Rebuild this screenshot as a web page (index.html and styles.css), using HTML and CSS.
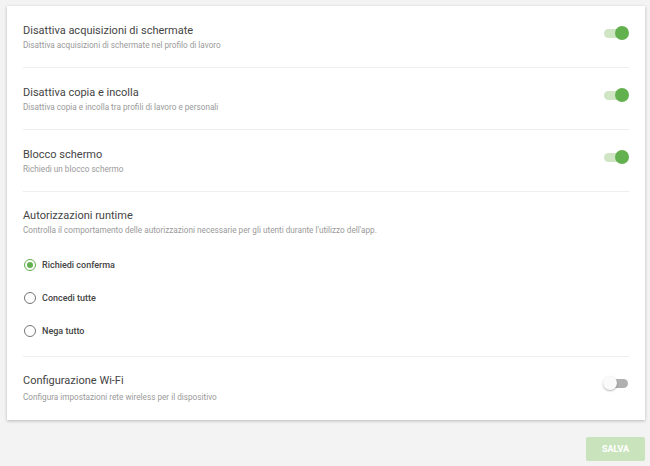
FILE: index.html
```html
<!DOCTYPE html>
<html lang="it">
<head>
<meta charset="utf-8">
<link rel="stylesheet" href="styles.css">
</head>
<body>
<div class="page">
  <div class="card">
    <div class="row">
      <div class="text">
        <div class="title">Disattiva acquisizioni di schermate</div>
        <div class="sub">Disattiva acquisizioni di schermate nel profilo di lavoro</div>
      </div>
      <div class="toggle on"><span class="thumb"></span></div>
    </div>
    <div class="row">
      <div class="text">
        <div class="title">Disattiva copia e incolla</div>
        <div class="sub">Disattiva copia e incolla tra profili di lavoro e personali</div>
      </div>
      <div class="toggle on"><span class="thumb"></span></div>
    </div>
    <div class="row">
      <div class="text">
        <div class="title">Blocco schermo</div>
        <div class="sub">Richiedi un blocco schermo</div>
      </div>
      <div class="toggle on"><span class="thumb"></span></div>
    </div>
    <div class="section">
      <div class="title">Autorizzazioni runtime</div>
      <div class="sub">Controlla il comportamento delle autorizzazioni necessarie per gli utenti durante l'utilizzo dell'app.</div>
      <div class="radios">
        <div class="radio checked"><span class="circle"></span><span class="label">Richiedi conferma</span></div>
        <div class="radio"><span class="circle"></span><span class="label">Concedi tutte</span></div>
        <div class="radio"><span class="circle"></span><span class="label">Nega tutto</span></div>
      </div>
    </div>
    <div class="row last">
      <div class="text">
        <div class="title">Configurazione Wi-Fi</div>
        <div class="sub">Configura impostazioni rete wireless per il dispositivo</div>
      </div>
      <div class="toggle off"><span class="thumb"></span></div>
    </div>
  </div>
  <div class="actions">
    <button class="save">SALVA</button>
  </div>
</div>
</body>
</html>
```
FILE: styles.css
```css
html, body {
  margin: 0;
  padding: 0;
  background: #f3f3f3;
  font-family: Roboto, "Liberation Sans", sans-serif;
}
.page {
  padding: 6px 5px 0 7px;
}
.card {
  background: #fff;
  box-shadow: 0 1px 3px rgba(0,0,0,0.25);
  padding: 0 16px;
}
.row {
  display: flex;
  align-items: flex-start;
  justify-content: space-between;
  box-sizing: border-box;
  height: 62px;
  padding-top: 18px;
  border-bottom: 1px solid #eeeeee;
}
.row.last {
  border-bottom: none;
  height: 63px;
  padding-top: 17px;
}
.title {
  font-size: 11px;
  color: #444;
  line-height: 14px;
}
.sub {
  font-size: 8.2px;
  color: #9a9a9a;
  line-height: 12px;
  margin-top: 1px;
}
.row.last .sub {
  margin-top: 3px;
}
.section {
  padding: 17px 0 18px;
  border-bottom: 1px solid #eeeeee;
}
.radios {
  margin-top: 22px;
  display: flex;
  flex-direction: column;
  gap: 19px;
}
.radio {
  display: flex;
  align-items: center;
  height: 14px;
}
.circle {
  width: 10px;
  height: 10px;
  border: 1.5px solid #757575;
  border-radius: 50%;
  box-sizing: content-box;
  position: relative;
  margin-left: 1px;
  margin-right: 6px;
}
.radio.checked .circle {
  border-color: #62b04e;
}
.radio.checked .circle::after {
  content: "";
  position: absolute;
  left: 2px;
  top: 2px;
  width: 6px;
  height: 6px;
  border-radius: 50%;
  background: #62b04e;
}
.label {
  font-size: 9px;
  font-weight: 500;
  color: #444;
}
.toggle {
  width: 24px;
  height: 9px;
  border-radius: 5px;
  position: relative;
  margin-right: 1px;
  margin-top: 5px;
}
.toggle.on {
  background: #cfe5c4;
}
.toggle.off {
  background: #b0b0b0;
  margin-top: 5px;
}
.thumb {
  position: absolute;
  top: -3px;
  width: 14px;
  height: 14px;
  border-radius: 50%;
}
.toggle.on .thumb {
  right: -1px;
  background: #62b04e;
}
.toggle.off .thumb {
  left: -1px;
  background: #fafafa;
  box-shadow: 0 1px 2px rgba(0,0,0,0.3);
}
.actions {
  display: flex;
  justify-content: flex-end;
  padding-top: 17px;
}
.save {
  width: 59px;
  height: 24px;
  border: none;
  border-radius: 2px;
  background: #c9e4bd;
  color: #fff;
  font-family: Roboto, "Liberation Sans", sans-serif;
  font-size: 9px;
  font-weight: 700;
}
```
